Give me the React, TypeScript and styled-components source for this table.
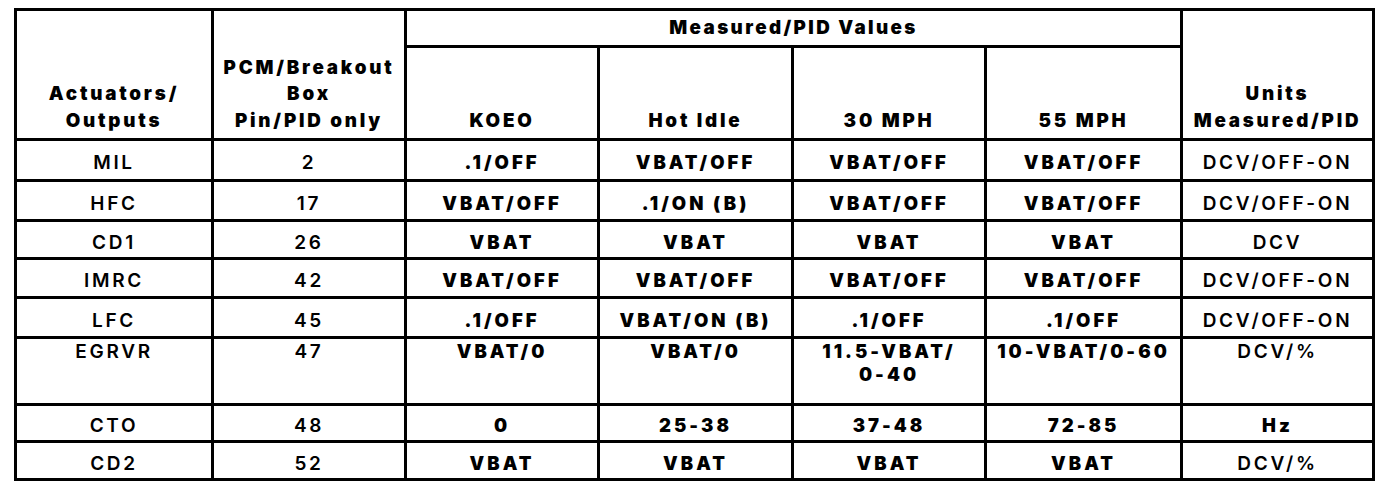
import React from "react";
import styled, { createGlobalStyle } from "styled-components";

const Global = createGlobalStyle`
  html, body { margin: 0; padding: 0; background: #ffffff; }
  body { font-family: Inter, "DejaVu Sans", sans-serif; color: #000; }
`;

const Grid = styled.div`
  display: inline-grid;
  margin: 8px 0 0 14px;
  padding: 3px;
  gap: 3px;
  background: #000;
  grid-template-columns: 194px 190px 190px 191px 190px 193px 189px;
  grid-template-rows: 34px 90px 38px 37px 35px 36px 37px 64px 34px 35px;
`;

const Cell = styled.div<{ $col: string; $row: string; $bold?: boolean; $top?: boolean }>`
  grid-column: ${(p) => p.$col};
  grid-row: ${(p) => p.$row};
  background: #fff;
  display: flex;
  flex-direction: column;
  align-items: center;
  justify-content: ${(p) => (p.$top ? "flex-start" : "center")};
  padding-top: ${(p) => (p.$top ? "1px" : "5px")};
  box-sizing: border-box;
  text-align: center;
  line-height: 23px;
  white-space: nowrap;
  font-family: Inter, "DejaVu Sans", sans-serif;
  font-size: ${(p) => (p.$bold ? "18.5px" : "19px")};
  font-weight: ${(p) => (p.$bold ? 900 : 600)};
  letter-spacing: ${(p) => (p.$bold ? "3px" : "2.7px")};
`;

const HeadCell = styled.div<{ $col: string; $row: string }>`
  grid-column: ${(p) => p.$col};
  grid-row: ${(p) => p.$row};
  background: #fff;
  display: flex;
  flex-direction: column;
  align-items: center;
  justify-content: flex-end;
  padding-bottom: 4px;
  box-sizing: border-box;
  text-align: center;
  line-height: 26.5px;
  font-family: Inter, "DejaVu Sans", sans-serif;
  font-size: 18.8px;
  font-weight: 900;
  letter-spacing: 2.8px;
  white-space: nowrap;
`;

const GroupTitle = styled(HeadCell)`
  justify-content: center;
  padding: 1px 0 0 0;
  letter-spacing: 2.4px;
`;

type Row = {
  name: string;
  pin: string;
  koeo: string;
  idle: string[];
  mph30: string[];
  mph55: string;
  unit: string;
  unitBold?: boolean;
  tall?: boolean;
};

const rows: Row[] = [
  { name: "MIL", pin: "2", koeo: ".1/OFF", idle: ["VBAT/OFF"], mph30: ["VBAT/OFF"], mph55: "VBAT/OFF", unit: "DCV/OFF-ON" },
  { name: "HFC", pin: "17", koeo: "VBAT/OFF", idle: [".1/ON (B)"], mph30: ["VBAT/OFF"], mph55: "VBAT/OFF", unit: "DCV/OFF-ON" },
  { name: "CD1", pin: "26", koeo: "VBAT", idle: ["VBAT"], mph30: ["VBAT"], mph55: "VBAT", unit: "DCV" },
  { name: "IMRC", pin: "42", koeo: "VBAT/OFF", idle: ["VBAT/OFF"], mph30: ["VBAT/OFF"], mph55: "VBAT/OFF", unit: "DCV/OFF-ON" },
  { name: "LFC", pin: "45", koeo: ".1/OFF", idle: ["VBAT/ON (B)"], mph30: [".1/OFF"], mph55: ".1/OFF", unit: "DCV/OFF-ON" },
  { name: "EGRVR", pin: "47", koeo: "VBAT/0", idle: ["VBAT/0"], mph30: ["11.5-VBAT/", "0-40"], mph55: "10-VBAT/0-60", unit: "DCV/%", tall: true },
  { name: "CTO", pin: "48", koeo: "0", idle: ["25-38"], mph30: ["37-48"], mph55: "72-85", unit: "Hz", unitBold: true },
  { name: "CD2", pin: "52", koeo: "VBAT", idle: ["VBAT"], mph30: ["VBAT"], mph55: "VBAT", unit: "DCV/%" },
];

const Lines = ({ items }: { items: string[] }) => (
  <>
    {items.map((t, i) => (
      <span key={i}>{t}</span>
    ))}
  </>
);

export default function App() {
  return (
    <>
      <Global />
      <Grid>
        <HeadCell $col="1" $row="1 / span 2">
          <span>Actuators/</span>
          <span>Outputs</span>
        </HeadCell>
        <HeadCell $col="2" $row="1 / span 2">
          <span>PCM/Breakout</span>
          <span>Box</span>
          <span>Pin/PID only</span>
        </HeadCell>
        <GroupTitle $col="3 / span 4" $row="1">
          Measured/PID Values
        </GroupTitle>
        <HeadCell $col="7" $row="1 / span 2">
          <span>Units</span>
          <span>Measured/PID</span>
        </HeadCell>
        <HeadCell $col="3" $row="2">KOEO</HeadCell>
        <HeadCell $col="4" $row="2">Hot Idle</HeadCell>
        <HeadCell $col="5" $row="2">30 MPH</HeadCell>
        <HeadCell $col="6" $row="2">55 MPH</HeadCell>
        {rows.map((r, i) => {
          const row = String(i + 3);
          return (
            <React.Fragment key={r.name}>
              <Cell $col="1" $row={row} $top={r.tall}>{r.name}</Cell>
              <Cell $col="2" $row={row} $top={r.tall}>{r.pin}</Cell>
              <Cell $col="3" $row={row} $top={r.tall} $bold>{r.koeo}</Cell>
              <Cell $col="4" $row={row} $top={r.tall} $bold>
                <Lines items={r.idle} />
              </Cell>
              <Cell $col="5" $row={row} $top={r.tall} $bold>
                <Lines items={r.mph30} />
              </Cell>
              <Cell $col="6" $row={row} $top={r.tall} $bold>{r.mph55}</Cell>
              <Cell $col="7" $row={row} $top={r.tall} $bold={r.unitBold}>{r.unit}</Cell>
            </React.Fragment>
          );
        })}
      </Grid>
    </>
  );
}
